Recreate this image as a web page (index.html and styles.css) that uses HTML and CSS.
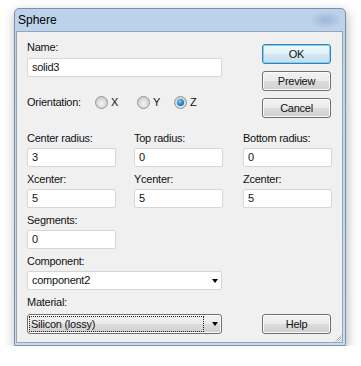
FILE: index.html
```html
<!DOCTYPE html>
<html lang="en">
<head>
    <meta charset="utf-8"/>
    <title>Sphere</title>
    <link rel="stylesheet" href="styles.css">
</head>
<body>
    <div class="window">
        <div class="titlebar">Sphere</div>
        <div class="client">
            <div class="top">
                <div class="top-fields">
                    <div class="lbl">Name:</div>
                    <div class="edit wide">solid3</div>
                    <div class="orient">
                        <span class="lbl">Orientation:</span>
                        <span class="opt"><span class="radio"></span>X</span>
                        <span class="opt"><span class="radio"></span>Y</span>
                        <span class="opt"><span class="radio checked"></span>Z</span>
                    </div>
                </div>
                <div class="buttons">
                    <div class="btn default">OK</div>
                    <div class="btn">Preview</div>
                    <div class="btn">Cancel</div>
                </div>
            </div>

            <div class="grid">
                <div class="field">
                    <div class="lbl">Center radius:</div>
                    <div class="edit">3</div>
                </div>
                <div class="field">
                    <div class="lbl">Top radius:</div>
                    <div class="edit">0</div>
                </div>
                <div class="field">
                    <div class="lbl">Bottom radius:</div>
                    <div class="edit">0</div>
                </div>
                <div class="field">
                    <div class="lbl">Xcenter:</div>
                    <div class="edit">5</div>
                </div>
                <div class="field">
                    <div class="lbl">Ycenter:</div>
                    <div class="edit">5</div>
                </div>
                <div class="field">
                    <div class="lbl">Zcenter:</div>
                    <div class="edit">5</div>
                </div>
                <div class="field">
                    <div class="lbl">Segments:</div>
                    <div class="edit">0</div>
                </div>
            </div>

            <div class="field single">
                <div class="lbl">Component:</div>
                <div class="edit wide combo">component2<span class="arrow"></span></div>
            </div>

            <div class="last-row">
                <div class="field">
                    <div class="lbl">Material:</div>
                    <div class="droplist">
                        <span class="focus">Silicon (lossy)</span>
                        <span class="arrow"></span>
                    </div>
                </div>
                <div class="btn">Help</div>
            </div>

            <svg class="grip" width="8" height="8" viewBox="0 0 8 8">
                <path d="M7.5 1.5 L1.5 7.5 M7.5 3.5 L3.5 7.5 M7.5 5.5 L5.5 7.5" stroke="#a0a8b2" stroke-width="1" fill="none"/>
                <path d="M7.5 2.5 L2.5 7.5 M7.5 4.5 L4.5 7.5 M7.5 6.5 L6.5 7.5" stroke="#ffffff" stroke-width="1" fill="none"/>
            </svg>
        </div>
    </div>
</body>
</html>
```

FILE: styles.css
```css
body {
    margin: 0;
    background: #fff;
    font-family: "Liberation Sans", Arial, sans-serif;
    font-size: 11px;
    letter-spacing: -0.25px;
    color: #111;
}

/* window frame */
.window {
    margin: 8px 0 0 14px;
    width: 332px;
    height: 338px;
    box-sizing: border-box;
    border: 1px solid #7c8fa6;
    border-radius: 5px 5px 0 0;
    padding: 0 2px 2px 1px;
    background: linear-gradient(#bcd2ea, #cadcf0);
    box-shadow: 1px 4px 12px rgba(0, 0, 0, 0.3);
}
.titlebar {
    height: 22px;
    line-height: 22px;
    padding-left: 2px;
    font-size: 12px;
    letter-spacing: 0;
    color: #000;
    background: radial-gradient(ellipse 16px 9px at 310px 11px, rgba(130, 160, 200, 0.55), rgba(130, 160, 200, 0));
}
.client {
    position: relative;
    height: 312px;
    box-sizing: border-box;
    border: 1px solid #95a6ba;
    background: #f0f0f0;
    padding: 9px 11px 0 10px;
}

.lbl {
    line-height: 13px;
    white-space: nowrap;
}

/* text boxes */
.edit {
    margin-top: 3px;
    width: 89px;
    height: 19px;
    box-sizing: border-box;
    border: 1px solid #d6d6d6;
    border-radius: 2px;
    background: #fff;
    padding-left: 4px;
    line-height: 17px;
}
.edit.wide {
    width: 195px;
}
.top-fields .edit {
    margin-top: 4px;
}

/* top block */
.top {
    display: flex;
    justify-content: space-between;
}
.orient {
    margin-top: 18px;
    display: grid;
    grid-template-columns: 68px 42px 37px auto;
    align-items: center;
    height: 14px;
}
.opt {
    display: flex;
    align-items: center;
    gap: 3px;
    line-height: 13px;
}
.radio {
    width: 11px;
    height: 11px;
    border: 1px solid #8f9699;
    border-radius: 50%;
    background: radial-gradient(circle at 50% 60%, #f4f4f4 0, #dedede 45%, #cfcfcf 70%, #eeeeee 100%);
    display: flex;
    align-items: center;
    justify-content: center;
}
.radio.checked::after {
    content: "";
    width: 7px;
    height: 7px;
    border-radius: 50%;
    background: radial-gradient(circle at 40% 35%, #8fd0f5 0, #2b8bd2 45%, #0e4f94 100%);
}

/* push buttons */
.buttons {
    margin-top: 3px;
    display: flex;
    flex-direction: column;
    gap: 7px;
}
.btn {
    width: 69px;
    height: 20px;
    box-sizing: border-box;
    border: 1px solid #707070;
    border-radius: 3px;
    background: linear-gradient(#f2f2f2 0, #ebebeb 50%, #dddddd 50%, #cfcfcf 100%);
    box-shadow: inset 0 0 0 1px #fbfbfb;
    text-align: center;
    line-height: 18px;
}
.btn.default {
    border-color: #3c7fb1;
    box-shadow: inset 0 0 0 1px #7fd0f6;
    background: linear-gradient(#eef7fc 0, #e3f1f9 50%, #d3e8f4 50%, #c4dfee 100%);
}

/* numeric fields */
.grid {
    margin-top: 14px;
    display: grid;
    grid-template-columns: 107px 109px 89px;
    row-gap: 6px;
}
.single {
    margin-top: 6px;
}
.combo {
    display: flex;
    justify-content: space-between;
    align-items: center;
    padding-right: 3px;
}
.arrow {
    width: 0;
    height: 0;
    border-left: 3.5px solid transparent;
    border-right: 3.5px solid transparent;
    border-top: 4px solid #000;
}

/* bottom row */
.last-row {
    margin-top: 6px;
    display: flex;
    justify-content: space-between;
    align-items: flex-end;
}
.droplist {
    margin-top: 5px;
    width: 195px;
    height: 20px;
    box-sizing: border-box;
    border: 1px solid #707070;
    border-radius: 3px;
    background: linear-gradient(#f2f2f2 0, #ebebeb 50%, #dddddd 50%, #cfcfcf 100%);
    box-shadow: inset 0 0 0 1px #fbfbfb;
    display: flex;
    align-items: center;
    justify-content: space-between;
    padding: 0 3px 0 1px;
}
.focus {
    width: 175px;
    height: 16px;
    box-sizing: border-box;
    border: 1px dotted #222;
    line-height: 14px;
    padding-left: 1px;
}

.grip {
    position: absolute;
    right: 0;
    bottom: 0;
}
```
